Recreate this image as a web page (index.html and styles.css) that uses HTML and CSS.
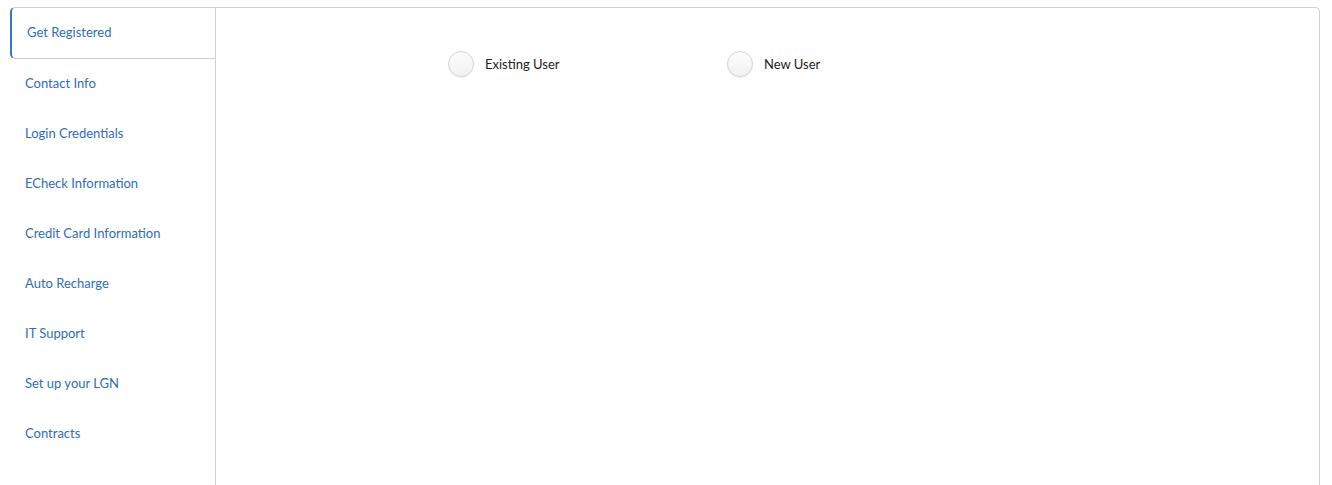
FILE: index.html
```html
<!DOCTYPE html>
<html>
<head>
<meta charset="utf-8">
<link rel="stylesheet" href="styles.css">
</head>
<body>
<div class="layout">
  <nav class="tabs">
    <a class="tab active">Get Registered</a>
    <a class="tab">Contact Info</a>
    <a class="tab">Login Credentials</a>
    <a class="tab">ECheck Information</a>
    <a class="tab">Credit Card Information</a>
    <a class="tab">Auto Recharge</a>
    <a class="tab">IT Support</a>
    <a class="tab">Set up your LGN</a>
    <a class="tab">Contracts</a>
  </nav>
  <main class="panel">
    <div class="choices">
      <label class="choice"><span class="radio"></span><span class="choice-label">Existing User</span></label>
      <label class="choice"><span class="radio"></span><span class="choice-label">New User</span></label>
    </div>
  </main>
</div>
</body>
</html>
```
FILE: styles.css
```css
html, body {
  margin: 0;
  padding: 0;
  background: #fff;
  height: 100%;
  overflow: hidden;
}
body {
  font-family: Lato, "Open Sans", sans-serif;
  font-size: 13px;
}
.layout {
  display: flex;
  box-sizing: border-box;
  padding: 7px 12px 0 10px;
  height: 100vh;
}
.tabs {
  width: 205px;
  flex: none;
  display: flex;
  flex-direction: column;
}
.tab {
  display: flex;
  align-items: center;
  flex: none;
  height: 50px;
  padding-left: 15px;
  color: #2f6db5;
  box-sizing: border-box;
}
.tab.active {
  height: 52px;
  margin-bottom: -1px;
  padding-bottom: 2px;
  border: 1px solid #cfcfcf;
  border-left: 2px solid #337ab7;
  border-right: none;
  border-radius: 5px 0 0 5px;
  padding-left: 15px;
}
.panel {
  flex: 1;
  border: 1px solid #cfcfcf;
  border-bottom: none;
  border-radius: 0 5px 0 0;
}
.choices {
  display: flex;
  padding: 43px 0 0 232px;
}
.choice {
  width: 279px;
  display: flex;
  align-items: center;
  color: #222;
}
.radio {
  width: 24px;
  height: 24px;
  border: 1px solid #d4d4d4;
  border-radius: 50%;
  background: linear-gradient(#fdfdfd, #f1f1f1);
  box-shadow: 0 1px 1px rgba(0,0,0,0.08);
  margin-right: 11px;
}
```
